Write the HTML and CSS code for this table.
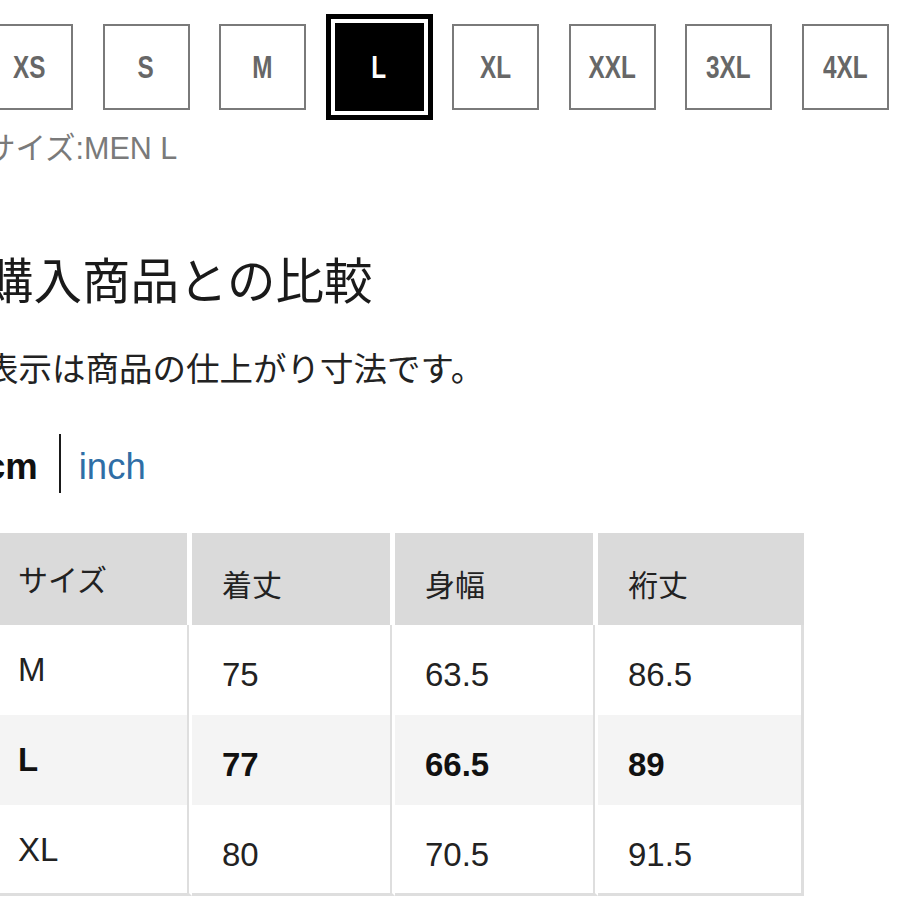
FILE: index.html
```html
<!DOCTYPE html>
<html lang="ja">
<head>
<meta charset="utf-8">
<title>サイズ</title>
<link rel="stylesheet" href="styles.css">
</head>
<body>
<div class="page">
  <div class="sizes">
    <div class="size"><span class="size-label">XS</span></div>
    <div class="size"><span class="size-label">S</span></div>
    <div class="size"><span class="size-label">M</span></div>
    <div class="size selected"><span class="size-label">L</span></div>
    <div class="size"><span class="size-label">XL</span></div>
    <div class="size"><span class="size-label">XXL</span></div>
    <div class="size"><span class="size-label">3XL</span></div>
    <div class="size"><span class="size-label">4XL</span></div>
  </div>
  <p class="caption">サイズ:MEN L</p>
  <h2 class="heading">購入商品との比較</h2>
  <p class="note">表示は商品の仕上がり寸法です。</p>
  <div class="units">
    <span class="unit active">cm</span>
    <span class="divider"></span>
    <span class="unit link">inch</span>
  </div>
  <table class="chart">
    <colgroup>
      <col class="c1"><col class="c2"><col class="c3"><col class="c4">
    </colgroup>
    <thead>
      <tr class="head-row">
        <th class="first">サイズ</th>
        <th>着丈</th>
        <th>身幅</th>
        <th class="last">裄丈</th>
      </tr>
    </thead>
    <tbody>
      <tr class="row">
        <td class="first">M</td>
        <td>75</td>
        <td>63.5</td>
        <td class="last">86.5</td>
      </tr>
      <tr class="row current">
        <td class="first">L</td>
        <td>77</td>
        <td>66.5</td>
        <td class="last">89</td>
      </tr>
      <tr class="row end">
        <td class="first">XL</td>
        <td>80</td>
        <td>70.5</td>
        <td class="last">91.5</td>
      </tr>
    </tbody>
  </table>
</div>
</body>
</html>
```
FILE: styles.css
```css
html, body {
  margin: 0;
  padding: 0;
  background: #ffffff;
}

body {
  width: 900px;
  height: 900px;
  overflow: hidden;
  font-family: "Liberation Sans", "Noto Sans CJK JP", sans-serif;
  color: #1e1e1e;
}

.page {
  margin-left: -15px;
  display: flex;
  flex-direction: column;
  align-items: flex-start;
}

.sizes {
  display: flex;
  gap: 29.5px;
  margin-top: 24px;
  margin-left: 1px;
}

.size {
  box-sizing: border-box;
  width: 87px;
  height: 86px;
  border: 2px solid #7a7a7a;
  display: flex;
  align-items: center;
  justify-content: center;
  font-family: "Liberation Sans", sans-serif;
  font-weight: bold;
  font-size: 32px;
  color: #676767;
}

.size-label {
  display: inline-block;
  transform: scaleX(0.76);
  white-space: nowrap;
}

.size.selected {
  background: #000;
  border-color: #000;
  color: #fff;
  box-shadow: 0 0 0 1px #000, 0 0 0 5px #fff, 0 0 0 10px #000;
}

.caption {
  margin: 20px 0 0 0;
  font-size: 30.5px;
  line-height: 36px;
  color: #7a7a7a;
}

.heading {
  margin: 86px 0 0 0;
  font-size: 48.5px;
  line-height: 60px;
  font-weight: normal;
  color: #1a1a1a;
}

.note {
  margin: 38px 0 0 0;
  font-size: 33.5px;
  line-height: 40px;
  color: #222;
}

.units {
  display: flex;
  align-items: center;
  margin-top: 44px;
  height: 59px;
}

.unit {
  font-size: 36.5px;
  line-height: 40px;
  padding-top: 6px;
}

.unit.active {
  font-weight: bold;
  color: #111;
}

.unit.link {
  color: #2f6ea6;
}

.divider {
  width: 2px;
  height: 59px;
  background: #1a1a1a;
  margin: 0 18px 0 21px;
}

.chart {
  margin-top: 40px;
  width: 819px;
  table-layout: fixed;
  border-collapse: separate;
  border-spacing: 0;
}

.c1 { width: 207px; }
.c2, .c3 { width: 203px; }
.c4 { width: 206px; }

.chart th,
.chart td {
  text-align: left;
  vertical-align: top;
  padding: 0 0 0 30px;
  white-space: nowrap;
}

.chart th.first,
.chart td.first { padding-left: 33px; }

.chart th {
  background: #dadada;
  font-weight: normal;
  font-size: 30px;
  line-height: 40px;
  color: #222;
  padding-top: 33px;
  border-right: 5px solid #fff;
}

.chart th.first { padding-top: 28px; }

.chart th.last {
  border-right: 2px solid #dadada;
}

.head-row { height: 92px; }

.row { height: 90px; }
.row.end { height: 91px; }

.chart td {
  font-size: 33px;
  line-height: 40px;
  color: #222;
  padding-top: 30px;
  border-right: 3px solid #fff;
  box-shadow: inset -2px 0 0 #dedede;
}

.chart td.first { padding-top: 25px; }

.chart td.last {
  border-right: 3px solid #dedede;
  box-shadow: none;
}

.row.current td {
  background: #f4f4f4;
  font-weight: bold;
  color: #111;
}

.row.end td {
  border-bottom: 3px solid #dedede;
}
```
